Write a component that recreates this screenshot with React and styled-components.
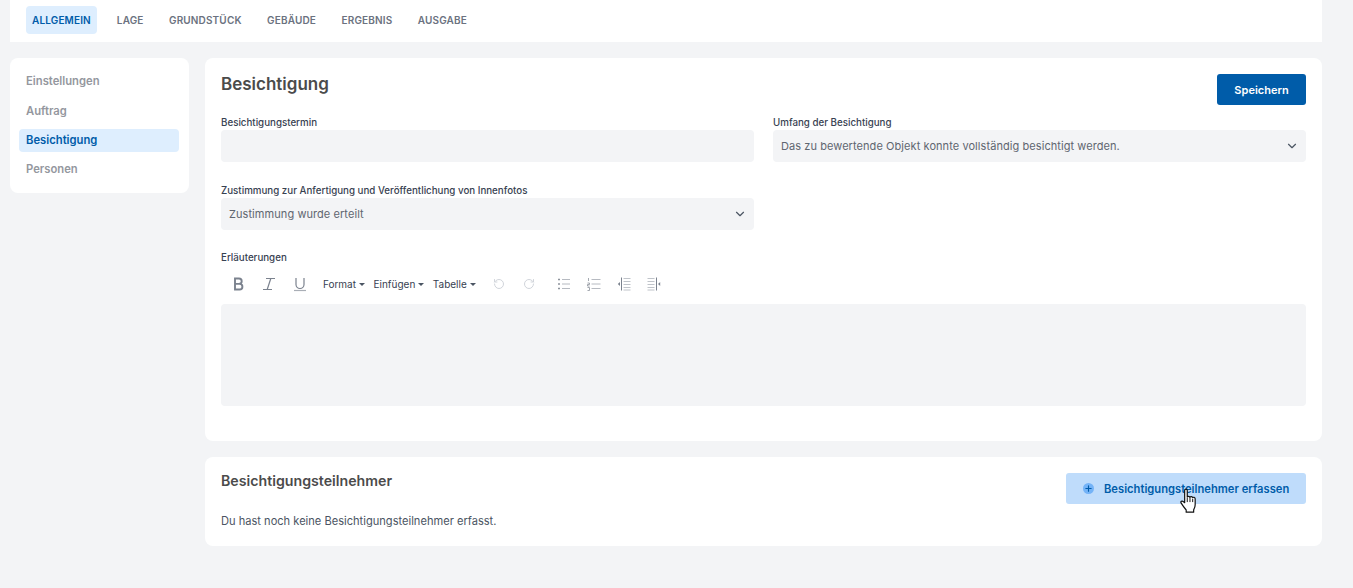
import React from 'react'
import styled, { createGlobalStyle } from 'styled-components'
import { RotateCcw, RotateCw, ChevronDown, Plus } from 'lucide-react'

const GlobalStyle = createGlobalStyle`
  html, body {
    margin: 0;
    height: 100%;
    background: #f3f4f6;
    overflow: hidden;
  }
  body {
    font-family: Inter, "Liberation Sans", sans-serif;
    color: #4b5563;
  }
  * { box-sizing: border-box; }
`

const tabs = ['Allgemein', 'Lage', 'Grundstück', 'Gebäude', 'Ergebnis', 'Ausgabe']
const sideItems = ['Einstellungen', 'Auftrag', 'Besichtigung', 'Personen']

function BoldIcon() {
  return (
    <IconSvg viewBox="0 0 16 16" $size={16}>
      <path
        d="M4 2.5h4a2.7 2.7 0 0 1 0 5.4H4zM4 7.9h4.6a2.8 2.8 0 0 1 0 5.6H4z"
        stroke="#7b828e"
        strokeWidth="1.9"
        fill="none"
      />
    </IconSvg>
  )
}

function ItalicIcon() {
  return (
    <IconSvg viewBox="0 0 16 16" $size={16}>
      <path d="M5 2.5h9M2 13.5h9M9.8 2.5L6.2 13.5" stroke="#7b828e" strokeWidth="1.2" fill="none" />
    </IconSvg>
  )
}

function UnderlineIcon() {
  return (
    <IconSvg viewBox="0 0 16 16" $size={16}>
      <path d="M4 2v6.5a4 4 0 0 0 8 0V2" stroke="#7b828e" strokeWidth="1.2" fill="none" />
      <path d="M2 14.5h12" stroke="#a9aeb6" strokeWidth="1.2" fill="none" />
    </IconSvg>
  )
}

function BulletIcon() {
  return (
    <IconSvg viewBox="0 0 14 14">
      <path d="M5 2.5h8M5 7h8M5 11.5h8" stroke="#b6bac1" strokeWidth="1" fill="none" />
      <path d="M1 2.5h2M1 7h2M1 11.5h2" stroke="#8d939c" strokeWidth="1.6" fill="none" />
    </IconSvg>
  )
}

function NumberIcon() {
  return (
    <IconSvg viewBox="0 0 14 14">
      <path d="M4.5 2.5h9M4.5 7h9M4.5 11.5h9" stroke="#b6bac1" strokeWidth="1" fill="none" />
      <path d="M1.5 1v3M.5 6h2v1.5h-2V9h2M.5 10.5h2v3h-2" stroke="#8d939c" strokeWidth=".8" fill="none" />
    </IconSvg>
  )
}

function OutdentIcon() {
  return (
    <IconSvg viewBox="0 0 14 14">
      <path d="M4.5 .5v13" stroke="#7b828e" strokeWidth="1" fill="none" />
      <path d="M6.5 1.5h7M6.5 4.5h7M6.5 7.5h7M6.5 10.5h7M6.5 13h7" stroke="#c0c4ca" strokeWidth="1" fill="none" />
      <path d="M3 5v4L.8 7z" fill="#7b828e" />
    </IconSvg>
  )
}

function IndentIcon() {
  return (
    <IconSvg viewBox="0 0 14 14">
      <path d="M9.5 .5v13" stroke="#7b828e" strokeWidth="1" fill="none" />
      <path d="M.5 1.5h7M.5 4.5h7M.5 7.5h7M.5 10.5h7M.5 13h7" stroke="#c0c4ca" strokeWidth="1" fill="none" />
      <path d="M13.2 5v4L11 7z" fill="#7b828e" />
    </IconSvg>
  )
}

function HandCursor() {
  return (
    <Cursor viewBox="0 0 20 24">
      <path
        d="M6 2.2c0-1.5 2.4-1.5 2.4 0v6.2c.3-1 2.3-1 2.5.2.4-.9 2.3-.8 2.5.4.5-.8 2.2-.5 2.3.9v5.6c0 2.2-.6 3.3-1.4 4.6v2.2H7.4v-2c-1-1.2-3.4-4.3-4.6-6.3-.9-1.5.7-2.6 1.9-1.5L6 13.6z"
        fill="#fff"
        stroke="#111"
        strokeWidth="1.1"
        strokeLinejoin="round"
      />
      <path d="M8.4 9v4M10.9 9v4M13.4 10v3" stroke="#111" strokeWidth=".9" />
    </Cursor>
  )
}

export default function App() {
  return (
    <Page>
      <GlobalStyle />
      <TopBar>
        {tabs.map((t, i) => (
          <Tab key={t} $active={i === 0}>{t}</Tab>
        ))}
      </TopBar>
      <Columns>
        <SideCard>
          {sideItems.map((s) => (
            <SideItem key={s} $active={s === 'Besichtigung'}>{s}</SideItem>
          ))}
        </SideCard>
        <Main>
          <FormCard>
            <CardHeader>
              <Title>Besichtigung</Title>
              <SaveButton>Speichern</SaveButton>
            </CardHeader>
            <FormGrid>
              <Field>
                <Label>Besichtigungstermin</Label>
                <Input />
              </Field>
              <Field>
                <Label>Umfang der Besichtigung</Label>
                <Input>
                  Das zu bewertende Objekt konnte vollständig besichtigt werden.
                  <ChevronDown size={14} color="#4b5563" />
                </Input>
              </Field>
              <Field>
                <Label>Zustimmung zur Anfertigung und Veröffentlichung von Innenfotos</Label>
                <Input>
                  Zustimmung wurde erteilt
                  <ChevronDown size={14} color="#4b5563" />
                </Input>
              </Field>
            </FormGrid>
            <Label>Erläuterungen</Label>
            <Toolbar>
              <ToolGroup>
                <ToolButton><BoldIcon /></ToolButton>
                <ToolButton><ItalicIcon /></ToolButton>
                <ToolButton><UnderlineIcon /></ToolButton>
              </ToolGroup>
              <MenuGroup>
                <Menu>Format</Menu>
                <Menu>Einfügen</Menu>
                <Menu>Tabelle</Menu>
              </MenuGroup>
              <ToolGroup>
                <ToolButton $muted><RotateCcw size={12} /></ToolButton>
                <ToolButton $muted><RotateCw size={12} /></ToolButton>
              </ToolGroup>
              <ListGroup>
                <ToolButton><BulletIcon /></ToolButton>
                <ToolButton><NumberIcon /></ToolButton>
                <ToolButton><OutdentIcon /></ToolButton>
                <ToolButton><IndentIcon /></ToolButton>
              </ListGroup>
            </Toolbar>
            <Editor />
          </FormCard>
          <ParticipantsCard>
            <ParticipantsHeader>
              <SubTitle>Besichtigungsteilnehmer</SubTitle>
              <AddButton>
                <PlusDot><Plus size={9} strokeWidth={3} /></PlusDot>
                Besichtigungsteilnehmer erfassen
                <HandCursor />
              </AddButton>
            </ParticipantsHeader>
            <EmptyText>Du hast noch keine Besichtigungsteilnehmer erfasst.</EmptyText>
          </ParticipantsCard>
        </Main>
      </Columns>
    </Page>
  )
}

const Page = styled.div`
  padding: 0 31px 0 10px;
`

const TopBar = styled.nav`
  display: flex;
  align-items: center;
  gap: 6px;
  height: 42px;
  padding: 0 16px 2px;
  background: #fff;
`

const Tab = styled.div`
  padding: 0 ${(p) => (p.$active ? '6px' : '7px')};
  margin-right: ${(p) => (p.$active ? '7px' : '5.5px')};
  height: 28px;
  line-height: 28px;
  border-radius: 4px;
  font-size: 10px;
  font-weight: 600;
  letter-spacing: 0.015em;
  text-transform: uppercase;
  color: ${(p) => (p.$active ? '#005ca9' : '#6b7280')};
  background: ${(p) => (p.$active ? '#deeefe' : 'transparent')};
`

const Columns = styled.div`
  display: flex;
  align-items: flex-start;
  gap: 16px;
  margin-top: 16px;
`

const SideCard = styled.aside`
  flex: 0 0 179px;
  height: 135px;
  padding: 12px 10px 9px 9px;
  background: #fff;
  border-radius: 8px;
`

const SideItem = styled.div`
  height: 23px;
  line-height: 23px;
  padding: 0 7px;
  margin-top: ${(p) => (p.$active ? '-1px' : '0')};
  margin-bottom: ${(p) => (p.$active ? '6px' : '7px')};
  border-radius: 4px;
  font-size: 11.25px;
  font-weight: 600;
  color: ${(p) => (p.$active ? '#005ca9' : '#94979e')};
  background: ${(p) => (p.$active ? '#deeefe' : 'transparent')};
`

const Main = styled.main`
  flex: 1;
  display: flex;
  flex-direction: column;
  gap: 16px;
  min-width: 0;
`

const FormCard = styled.section`
  height: 383px;
  padding: 16px;
  background: #fff;
  border-radius: 8px;
`

const CardHeader = styled.div`
  display: flex;
  justify-content: space-between;
  align-items: flex-start;
  height: 40px;
`

const Title = styled.h1`
  margin: 0;
  font-size: 17px;
  line-height: 21px;
  font-weight: 600;
  color: #4b4b4b;
`

const SaveButton = styled.button`
  width: 89px;
  height: 31px;
  border: 0;
  border-radius: 3px;
  background: #005ca9;
  color: #fff;
  font-family: inherit;
  font-size: 11px;
  font-weight: 600;
`

const FormGrid = styled.div`
  display: grid;
  grid-template-columns: 533px 533px;
  column-gap: 19px;
  row-gap: 20px;
  margin-bottom: 19px;
`

const Field = styled.div`
  display: flex;
  flex-direction: column;
`

const Label = styled.label`
  display: block;
  height: 16px;
  line-height: 17px;
  font-size: 9.75px;
  font-weight: 500;
  color: #374151;
`

const Input = styled.div`
  display: flex;
  align-items: center;
  justify-content: space-between;
  height: 32px;
  padding: 0 7px 0 8px;
  border-radius: 4px;
  background: #f3f4f6;
  font-size: 11px;
  letter-spacing: 0.07px;
  color: #5f6670;
`

const Toolbar = styled.div`
  display: flex;
  align-items: center;
  height: 30px;
  margin-top: 4px;
  padding-left: 3px;
`

const ToolGroup = styled.div`
  display: flex;
  align-items: center;
  margin-right: 2px;
`

const ListGroup = styled(ToolGroup)`
  margin-left: 2px;
`

const ToolButton = styled.span`
  display: flex;
  align-items: center;
  justify-content: center;
  width: 30.3px;
  color: ${(p) => (p.$muted ? '#d1d5db' : '#6b7280')};
`

const IconSvg = styled.svg`
  width: ${(p) => p.$size || 14}px;
  height: ${(p) => p.$size || 14}px;
`

const MenuGroup = styled.div`
  display: flex;
  align-items: center;
  gap: 8.5px;
  margin: 0 8px 0 6px;
`

const Menu = styled.span`
  display: flex;
  align-items: center;
  font-size: 10px;
  color: #374151;

  &::after {
    content: '';
    margin-left: 3px;
    border-left: 3px solid transparent;
    border-right: 3px solid transparent;
    border-top: 3px solid #4b5563;
  }
`

const Editor = styled.div`
  height: 102px;
  margin-top: 5px;
  border-radius: 4px;
  background: #f3f4f6;
`

const ParticipantsCard = styled.section`
  height: 89px;
  padding: 16px;
  background: #fff;
  border-radius: 8px;
`

const ParticipantsHeader = styled.div`
  display: flex;
  justify-content: space-between;
  align-items: flex-start;
`

const SubTitle = styled.h2`
  margin: 0;
  font-size: 14.2px;
  line-height: 15px;
  font-weight: 600;
  color: #4b4b4b;
`

const AddButton = styled.button`
  position: relative;
  display: flex;
  align-items: center;
  gap: 10px;
  width: 240px;
  height: 31px;
  padding: 0 0 0 17px;
  border: 0;
  border-radius: 3px;
  background: #bfdcfb;
  color: #005ca9;
  font-family: inherit;
  font-size: 11.2px;
  font-weight: 600;
`

const PlusDot = styled.span`
  display: flex;
  align-items: center;
  justify-content: center;
  width: 11px;
  height: 11px;
  border-radius: 50%;
  background: #74b3f7;
  color: #005ca9;
`

const Cursor = styled.svg`
  position: absolute;
  left: 112px;
  top: 15px;
  width: 22px;
  height: 26px;
`

const EmptyText = styled.p`
  margin: 10px 0 0;
  font-size: 11.1px;
  line-height: 14px;
  color: #4b5563;
`
